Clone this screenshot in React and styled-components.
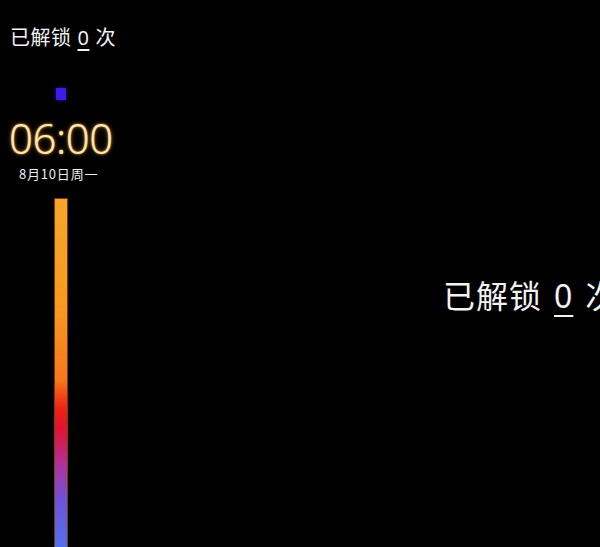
import React from "react";
import styled, { createGlobalStyle } from "styled-components";

const GlobalStyle = createGlobalStyle`
  html, body {
    margin: 0;
    padding: 0;
    background: #000;
  }
  body {
    font-family: "Noto Sans CJK SC", "Noto Sans", sans-serif;
  }
`;

const Screen = styled.div`
  width: 600px;
  height: 547px;
  background: #000;
  display: flex;
  overflow: hidden;
`;

const Side = styled.div`
  width: 122px;
  flex-shrink: 0;
  display: flex;
  flex-direction: column;
  align-items: flex-start;
`;

const Counter = styled.div`
  color: #f2f2f2;
  font-size: ${({ $size }) => $size}px;
  line-height: 1;
  white-space: nowrap;
  letter-spacing: ${({ $size }) => ($size > 24 ? 1 : 0.5)}px;
`;

const Num = styled.span`
  display: inline-block;
  font-family: "Noto Sans", sans-serif;
  margin: 0 ${({ $gap }) => $gap}px;
  text-decoration: underline;
  text-underline-offset: ${({ $gap }) => $gap / 2 + 1}px;
  text-decoration-thickness: ${({ $gap }) => ($gap > 8 ? 2 : 1.5)}px;
`;

const TopCounter = styled(Counter)`
  margin: 27px 0 0 10px;
`;

const Dot = styled.div`
  width: 10px;
  height: 12px;
  margin: 40px 0 0 56px;
  background: #3a1ee8;
  box-shadow: 0 0 4px rgba(70, 40, 255, 0.6);
`;

const Time = styled.div`
  margin: 17px 0 0 9px;
  font-family: "Noto Sans", sans-serif;
  font-weight: 300;
  font-size: 42px;
  line-height: 1;
  letter-spacing: -0.5px;
  color: #fbe6b4;
  text-shadow: 0 0 2px #e8a040, 0 0 5px rgba(230, 140, 40, 0.6);
`;

const DateLine = styled.div`
  margin: 8px 0 0 19px;
  color: #eee;
  font-size: 13px;
  line-height: 1;
  letter-spacing: 0.8px;
`;

const Bar = styled.div`
  margin: 18px 0 0 54px;
  width: 12px;
  flex: 1;
  border: 1px solid #7a3a10;
  border-bottom: none;
  background: linear-gradient(
    to bottom,
    #f6a62a 0%,
    #f69a20 30%,
    #f5781c 52%,
    #f02214 60%,
    #e21230 66%,
    #b2309a 76%,
    #6f52d8 86%,
    #5070f0 100%
  );
`;

const Main = styled.div`
  flex: 1;
  display: flex;
  align-items: flex-start;
  padding: 278px 0 0 321px;
`;

export default function App() {
  return (
    <>
      <GlobalStyle />
      <Screen>
        <Side>
          <TopCounter $size={20}>
            已解锁<Num $gap={6}>0</Num>次
          </TopCounter>
          <Dot />
          <Time>06:00</Time>
          <DateLine>8月10日周一</DateLine>
          <Bar />
        </Side>
        <Main>
          <Counter $size={32}>
            已解锁<Num $gap={12}>0</Num>次
          </Counter>
        </Main>
      </Screen>
    </>
  );
}
